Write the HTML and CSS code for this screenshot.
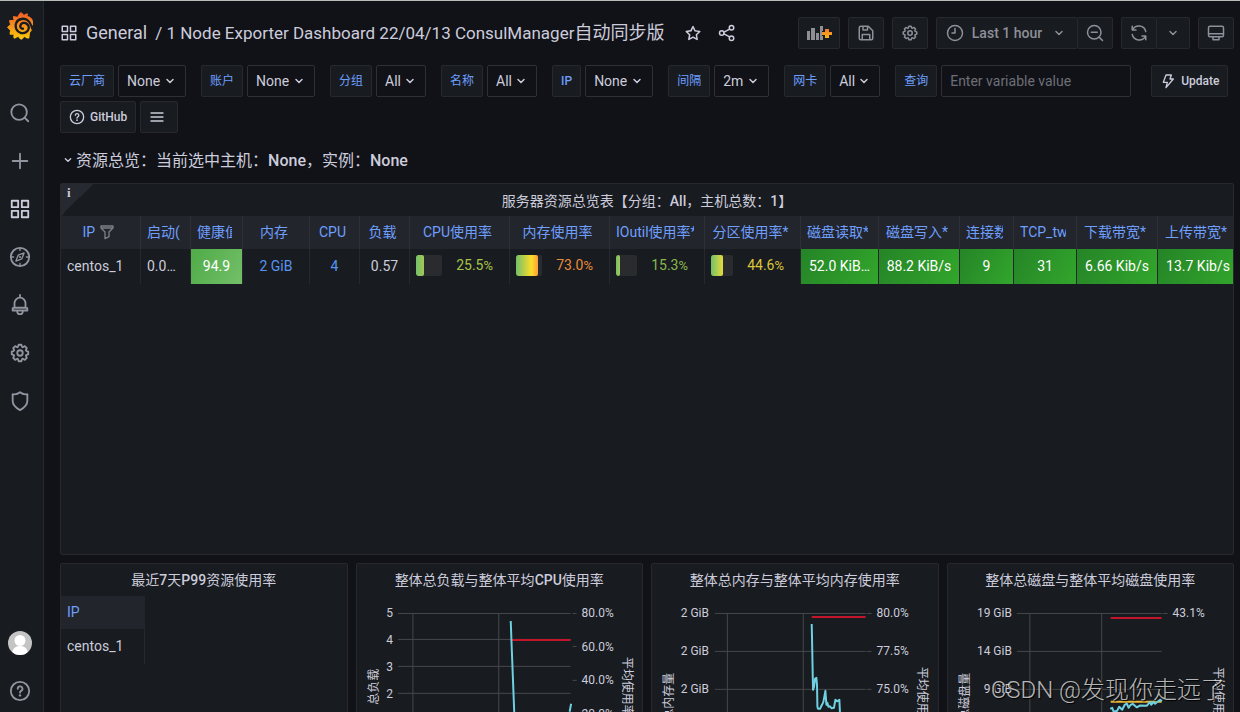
FILE: index.html
```html
<!DOCTYPE html>
<html lang="zh-CN">
<head>
    <meta charset="UTF-8">
    <meta name="viewport" content="width=device-width, initial-scale=1.0">
    <title>1 Node Exporter Dashboard - Grafana</title>
    <link rel="stylesheet" href="styles.css">
</head>
<body>
    <!-- Icon sprite -->
    <svg class="sprite" aria-hidden="true">
        <defs>
            <linearGradient id="logo-fill" x1="0" y1="0" x2="0" y2="1">
                <stop offset="0" stop-color="#f05a28"/>
                <stop offset="1" stop-color="#fbca0a"/>
            </linearGradient>
            <linearGradient id="plus-fill" x1="0" y1="0" x2="0" y2="1">
                <stop offset="0" stop-color="#f2762e"/>
                <stop offset="1" stop-color="#fbb917"/>
            </linearGradient>
        </defs>
        <symbol id="i-apps" viewBox="0 0 24 24"><path class="line" d="M3 3h7v7H3zM14 3h7v7h-7zM3 14h7v7H3zM14 14h7v7h-7z"/></symbol>
        <symbol id="i-search" viewBox="0 0 24 24"><path class="line" d="M21 21l-4-4"/><circle class="line" cx="11" cy="11" r="8.5"/></symbol>
        <symbol id="i-plus" viewBox="0 0 24 24"><path class="line" d="M12 4v16M4 12h16"/></symbol>
        <symbol id="i-compass" viewBox="0 0 24 24"><circle class="line" cx="12" cy="12" r="10"/><path class="line thin" d="M12 2v3M12 19v3M2 12h3M19 12h3M16.500 7.500l-2.500 6.500-6.500 2.500 2.500-6.500z"/><circle cx="12" cy="12" r="1.200"/></symbol>
        <symbol id="i-bell" viewBox="0 0 24 24"><path class="line" d="M12 1v3M6 15v-5a6 6 0 0 1 12 0v5M5 15h14a1 1 0 0 1 1 1v2H4v-2a1 1 0 0 1 1-1zM9 19a3 3 0 0 0 6 0"/></symbol>
        <symbol id="i-cog" viewBox="0 0 24 24"><path d="M21.32,9.55l-1.89-.63.89-1.78A1,1,0,0,0,20.13,6L18,3.87a1,1,0,0,0-1.15-.19l-1.78.89-.63-1.89A1,1,0,0,0,13.5,2h-3a1,1,0,0,0-.95.68L8.92,4.57,7.14,3.68A1,1,0,0,0,6,3.87L3.87,6a1,1,0,0,0-.19,1.15l.89,1.78-1.89.63A1,1,0,0,0,2,10.5v3a1,1,0,0,0,.68.95l1.89.63-.89,1.78A1,1,0,0,0,3.87,18L6,20.13a1,1,0,0,0,1.15.19l1.78-.89.63,1.89a1,1,0,0,0,.95.68h3a1,1,0,0,0,.95-.68l.63-1.89,1.78.89A1,1,0,0,0,18,20.13L20.13,18a1,1,0,0,0,.19-1.15l-.89-1.78,1.89-.63A1,1,0,0,0,22,13.5v-3A1,1,0,0,0,21.32,9.55ZM20,12.78l-1.2.4A2,2,0,0,0,17.64,16l.57,1.14-1.1,1.1L16,17.64a2,2,0,0,0-2.79,1.16l-.4,1.2H11.22l-.4-1.2A2,2,0,0,0,8,17.64l-1.14.57-1.1-1.1L6.36,16A2,2,0,0,0,5.2,13.18L4,12.78V11.22l1.2-.4A2,2,0,0,0,6.36,8L5.79,6.89l1.1-1.1L8,6.36A2,2,0,0,0,10.82,5.2l.4-1.2h1.56l.4,1.2A2,2,0,0,0,16,6.36l1.14-.57,1.1,1.1L17.64,8a2,2,0,0,0,1.16,2.79l1.2.4ZM12,8a4,4,0,1,0,4,4A4,4,0,0,0,12,8Zm0,6a2,2,0,1,1,2-2A2,2,0,0,1,12,14Z"/></symbol>
        <symbol id="i-shield" viewBox="0 0 24 24"><path class="line" d="M4 4.500c3 .6 5.500 0 8-2 2.500 2 5 2.600 8 2v7.500c0 4-3.500 7.500-8 10-4.500-2.500-8-6-8-10z"/></symbol>
        <symbol id="i-help" viewBox="0 0 24 24"><circle class="line" cx="12" cy="12" r="10"/><path class="line" d="M9.500 9.500a2.600 2.600 0 1 1 3.800 2.300c-.9.500-1.300.9-1.300 2"/><circle cx="12" cy="16.800" r="1.300"/></symbol>
        <symbol id="i-star" viewBox="0 0 24 24"><path d="M22,9.67A1,1,0,0,0,21.14,9l-5.69-.83L12.9,3a1,1,0,0,0-1.8,0L8.55,8.16,2.86,9a1,1,0,0,0-.81.68,1,1,0,0,0,.25,1l4.13,4-1,5.68A1,1,0,0,0,6.9,21.44L12,18.77l5.1,2.67a.93.93,0,0,0,.46.12,1,1,0,0,0,.59-.19,1,1,0,0,0,.4-1l-1-5.68,4.13-4A1,1,0,0,0,22,9.67Zm-6.15,4a1,1,0,0,0-.29.88l.72,4.2-3.76-2a1.06,1.06,0,0,0-.94,0l-3.76,2,.72-4.2a1,1,0,0,0-.29-.88l-3-3,4.21-.61a1,1,0,0,0,.76-.55L12,5.7l1.88,3.82a1,1,0,0,0,.76.55l4.21.61Z"/></symbol>
        <symbol id="i-share" viewBox="0 0 24 24"><path class="line" d="M8 10.800l7.500-4M8 13.200l7.500 4"/><circle class="line" cx="5" cy="12" r="3"/><circle class="line" cx="18" cy="5" r="3"/><circle class="line" cx="18" cy="19" r="3"/></symbol>
        <symbol id="i-save" viewBox="0 0 24 24"><path class="line" d="M3 5a2 2 0 0 1 2-2h10l6 6v10a2 2 0 0 1-2 2H5a2 2 0 0 1-2-2zM8 3v5h6V3M7 21v-7h10v7"/></symbol>
        <symbol id="i-clock" viewBox="0 0 24 24"><circle class="line" cx="12" cy="12" r="10"/><path class="line" d="M12 6v6H8"/></symbol>
        <symbol id="i-down" viewBox="0 0 24 24"><path class="line" d="M8 10l4 4 4-4"/></symbol>
        <symbol id="i-zoomout" viewBox="0 0 24 24"><path class="line" d="M22 22l-4.500-4.500M7 11h8"/><circle class="line" cx="11" cy="11" r="9"/></symbol>
        <symbol id="i-sync" viewBox="0 0 24 24"><path class="line" d="M3 3v5h5M3.500 7.500A9.500 9.500 0 0 1 21 10M21 21v-5h-5M20.500 16.500A9.500 9.500 0 0 1 3 14"/></symbol>
        <symbol id="i-monitor" viewBox="0 0 24 24"><path class="line" d="M4 3h16a2 2 0 0 1 2 2v10a2 2 0 0 1-2 2H4a2 2 0 0 1-2-2V5a2 2 0 0 1 2-2zM2 13h20M8 17v4h8v-4"/></symbol>
        <symbol id="i-bolt" viewBox="0 0 24 24"><path class="line" d="M9 3h8l-2 6h5L9 22l2-8H5z"/></symbol>
        <symbol id="i-bars" viewBox="0 0 24 24"><path class="line" d="M3 6h18M3 12h18M3 18h18"/></symbol>
        <symbol id="i-filter" viewBox="0 0 24 24"><path class="line" d="M3 3h18v3l-6 6v7l-6 3V12L3 6zM3 6h18"/></symbol>
    </svg>

    <!-- Side Menu -->
    <nav class="sidemenu">
        <a href="#" class="logo" aria-label="Grafana">
            <svg viewBox="0 0 78 84">
                <path fill="url(#logo-fill)" d="M42 0l9 8c5-3 9-4 12-3l-1 7c9 3 14 8 16 15l0 12-3 3 1 9c-1 4-3 6-5 8l-2 3-2 17c-6 1-11-1-14-5l-9 9c-5-2-9-5-10-9l-12 6c-3-3-4-8-2-12l-11 0c-2-4-1-9 1-12l-10-10 10-9c-3-4-4-8-3-13l13 0c-3-5-2-9-1-12l13 2c2-6 5-10 10-14z"/>
                <path fill="none" stroke="#181b1f" stroke-width="7" stroke-linecap="round" d="M76 50C70 26 56 18 43 21 28 24 23 38 28 51c5 12 20 16 30 9 9-6 10-18 2-24-7-6-18-4-20 5-1 6 3 10 8 9"/>
            </svg>
        </a>
        <a href="#" class="side-link" aria-label="Search"><svg><use href="#i-search"/></svg></a>
        <a href="#" class="side-link" aria-label="Create"><svg><use href="#i-plus"/></svg></a>
        <a href="#" class="side-link active" aria-label="Dashboards"><svg><use href="#i-apps"/></svg></a>
        <a href="#" class="side-link" aria-label="Explore"><svg><use href="#i-compass"/></svg></a>
        <a href="#" class="side-link" aria-label="Alerting"><svg><use href="#i-bell"/></svg></a>
        <a href="#" class="side-link" aria-label="Configuration"><svg><use href="#i-cog"/></svg></a>
        <a href="#" class="side-link" aria-label="Server Admin"><svg><use href="#i-shield"/></svg></a>
        <div class="side-bottom">
            <a href="#" class="side-link avatar" aria-label="Profile">
                <svg viewBox="0 0 24 24">
                    <clipPath id="round"><circle cx="12" cy="12" r="12"/></clipPath>
                    <g clip-path="url(#round)">
                        <rect width="24" height="24" fill="#c4c4c4"/>
                        <circle cx="12" cy="9.500" r="5.500" fill="#fff"/>
                        <path fill="#fff" d="M4 24c0-6 3-9 8-9s8 3 8 9z"/>
                    </g>
                </svg>
            </a>
            <a href="#" class="side-link" aria-label="Help"><svg><use href="#i-help"/></svg></a>
        </div>
    </nav>

    <!-- Main Content -->
    <main class="dashboard">
        <header class="toolbar">
            <svg class="icon"><use href="#i-apps"/></svg>
            <h1 class="page-title"><a href="#">General</a><a href="#" class="board-name">/ 1 Node Exporter Dashboard 22/04/13 ConsulManager<span>自动同步版</span></a></h1>
            <button class="icon-btn" aria-label="Mark as favorite"><svg class="icon"><use href="#i-star"/></svg></button>
            <button class="icon-btn" aria-label="Share"><svg class="icon"><use href="#i-share"/></svg></button>
            <div class="toolbar-actions">
                <button class="btn btn-wide" aria-label="Add panel">
                    <svg class="add-panel" viewBox="0 0 24 14">
                        <path fill="#8e8f94" d="M0 5h3v9H0zM4 2h4v12H4zM9 7h3v7H9zM13 0h3v5h-1v5h1v4h-3z"/>
                        <path fill="url(#plus-fill)" d="M18 3h4v3h3v3h-3v3h-4V9h-3V6h3z"/>
                    </svg>
                </button>
                <button class="btn" aria-label="Save dashboard"><svg class="icon"><use href="#i-save"/></svg></button>
                <button class="btn" aria-label="Dashboard settings"><svg class="icon"><use href="#i-cog"/></svg></button>
                <div class="btn-group">
                    <button class="btn btn-time"><svg class="icon"><use href="#i-clock"/></svg>Last 1 hour<svg class="icon"><use href="#i-down"/></svg></button>
                    <button class="btn" aria-label="Zoom out"><svg class="icon"><use href="#i-zoomout"/></svg></button>
                </div>
                <div class="btn-group">
                    <button class="btn" aria-label="Refresh"><svg class="icon"><use href="#i-sync"/></svg></button>
                    <button class="btn btn-caret" aria-label="Refresh interval"><svg class="icon"><use href="#i-down"/></svg></button>
                </div>
                <button class="btn" aria-label="Cycle view mode"><svg class="icon"><use href="#i-monitor"/></svg></button>
            </div>
        </header>

        <!-- Variables -->
        <div class="submenu">
            <div class="variable"><label for="var-vendor">云厂商</label><select id="var-vendor"><option>None</option></select></div>
            <div class="variable"><label for="var-account">账户</label><select id="var-account"><option>None</option></select></div>
            <div class="variable"><label for="var-group">分组</label><select id="var-group"><option>All</option></select></div>
            <div class="variable"><label for="var-name">名称</label><select id="var-name"><option>All</option></select></div>
            <div class="variable"><label for="var-ip"><b>IP</b></label><select id="var-ip"><option>None</option></select></div>
            <div class="variable"><label for="var-interval">间隔</label><select id="var-interval"><option>2m</option></select></div>
            <div class="variable"><label for="var-nic">网卡</label><select id="var-nic"><option>All</option></select></div>
            <div class="variable"><label for="var-query">查询</label><input type="text" id="var-query" placeholder="Enter variable value"></div>
            <a href="#" class="btn dash-link update-link"><svg class="icon"><use href="#i-bolt"/></svg>Update</a>
        </div>
        <div class="links">
            <a href="#" class="btn dash-link"><svg class="icon"><use href="#i-help"/></svg>GitHub</a>
            <button class="btn menu-btn" aria-label="Dashboards menu"><svg class="icon"><use href="#i-bars"/></svg></button>
        </div>

        <h2 class="row-title"><svg class="icon"><use href="#i-down"/></svg><span>资源总览<span class="colon">：</span>当前选中主机<span class="colon">：</span><b>None</b>，实例<span class="colon">：</span><b>None</b></span></h2>

        <!-- Overview table -->
        <section class="panel overview">
            <span class="panel-info">i</span>
            <h3 class="panel-title">服务器资源总览表【分组<span class="colon">：</span><b>All</b>，主机总数<span class="colon">：</span><b>1</b>】</h3>
            <div class="table-wrap">
                <table class="overview-table">
                    <colgroup>
                        <col class="w80"><col class="w50"><col class="w52"><col class="w67"><col class="w50"><col class="w50">
                        <col class="w100"><col class="w100"><col class="w95"><col class="w96"><col class="w78"><col class="w81">
                        <col class="w54"><col class="w63"><col class="w81"><col class="w81">
                    </colgroup>
                    <thead>
                        <tr>
                            <th><div>IP <svg class="filter"><use href="#i-filter"/></svg></div></th>
                            <th><div>启动(</div></th>
                            <th><div>健康值</div></th>
                            <th><div>内存</div></th>
                            <th><div>CPU</div></th>
                            <th><div>负载</div></th>
                            <th><div>CPU使用率</div></th>
                            <th><div>内存使用率</div></th>
                            <th><div>IOutil使用率*</div></th>
                            <th><div>分区使用率*</div></th>
                            <th><div>磁盘读取*</div></th>
                            <th><div>磁盘写入*</div></th>
                            <th><div>连接数</div></th>
                            <th><div>TCP_tw</div></th>
                            <th><div>下载带宽*</div></th>
                            <th><div>上传带宽*</div></th>
                        </tr>
                    </thead>
                    <tbody>
                        <tr>
                            <td class="left">centos_1</td>
                            <td class="left">0.0…</td>
                            <td class="health">94.9</td>
                            <td class="blue">2 GiB</td>
                            <td class="blue">4</td>
                            <td>0.57</td>
                            <td><div class="gauge-cell"><div class="gauge"><div class="fill fill-low" style="width: 31%"></div></div><span class="value lime">25.5<small>%</small></span></div></td>
                            <td><div class="gauge-cell"><div class="gauge"><div class="fill fill-high" style="width: 85%"></div></div><span class="value orange">73.0<small>%</small></span></div></td>
                            <td><div class="gauge-cell"><div class="gauge"><div class="fill fill-low" style="width: 20%"></div></div><span class="value green">15.3<small>%</small></span></div></td>
                            <td><div class="gauge-cell"><div class="gauge"><div class="fill fill-mid" style="width: 55%"></div></div><span class="value yellow">44.6<small>%</small></span></div></td>
                            <td class="good">52.0 KiB…</td>
                            <td class="good">88.2 KiB/s</td>
                            <td class="good">9</td>
                            <td class="good">31</td>
                            <td class="good">6.66 Kib/s</td>
                            <td class="good">13.7 Kib/s</td>
                        </tr>
                    </tbody>
                </table>
            </div>
        </section>

        <!-- Bottom panels -->
        <div class="panel-row">
            <section class="panel">
                <h3 class="panel-title">最近<b>7</b>天<b>P99</b>资源使用率</h3>
                <table class="p99-table">
                    <thead><tr><th>IP</th></tr></thead>
                    <tbody><tr><td>centos_1</td></tr></tbody>
                </table>
            </section>

            <section class="panel">
                <h3 class="panel-title">整体总负载与整体平均<b>CPU</b>使用率</h3>
                <svg class="chart" viewBox="0 0 286 180">
                    <path class="grid" d="M41 17.500H214M41 43.500H214M41 70.500H214M41 97.500H214M41 124.500H214M56 17V180M142 17V180M216 17.500h4M216 50.500h4M216 84.500h4M216 117.500h4"/>
                    <g class="tick-left">
                        <text x="36" y="21">5</text><text x="36" y="48">4</text><text x="36" y="75">3</text><text x="36" y="102">2</text>
                    </g>
                    <g class="tick-right">
                        <text x="225" y="21">80.0%</text><text x="225" y="55">60.0%</text><text x="225" y="88">40.0%</text><text x="225" y="122">20.0%</text>
                    </g>
                    <path class="series red" d="M154 44H214"/>
                    <path class="series cyan" d="M154 25L155 52L157.500 116L160 140M213 116L214.500 108"/>
                    <text class="axis-name" transform="translate(17 91) rotate(-90)">总负载</text>
                    <text class="axis-name" transform="translate(270 91) rotate(90)">平均使用率</text>
                </svg>
            </section>

            <section class="panel">
                <h3 class="panel-title">整体总内存与整体平均内存使用率</h3>
                <svg class="chart" viewBox="0 0 286 180">
                    <path class="grid" d="M63 17.500H214M63 55.500H214M63 93.500H214M75.500 17V180M151.500 17V180M215 17.500h5M215 55.500h5M215 93.500h5"/>
                    <g class="tick-left">
                        <text x="57" y="21">2 GiB</text><text x="57" y="59">2 GiB</text><text x="57" y="97">2 GiB</text>
                    </g>
                    <g class="tick-right">
                        <text x="225" y="21">80.0%</text><text x="225" y="59">77.5%</text><text x="225" y="97">75.0%</text>
                    </g>
                    <path class="series red" d="M160 21H214"/>
                    <path class="series cyan" d="M160 28L160.300 42L161 79L161.300 94L162.300 91L163.300 83L164.700 82L165.300 89L165.700 111L166.300 113L168.300 113L170.300 109L171.700 106L173.700 95L174.700 109L175.700 107L176.700 111L178.300 110.500L180 112.500L182.300 112L183.700 104L185.300 105.500L187.700 104L188.300 117"/>
                    <text class="axis-name" transform="translate(17 101) rotate(-90)">总内存量</text>
                    <text class="axis-name" transform="translate(270 101) rotate(90)">平均使用率</text>
                </svg>
            </section>

            <section class="panel">
                <h3 class="panel-title">整体总磁盘与整体平均磁盘使用率</h3>
                <svg class="chart" viewBox="0 0 286 180">
                    <path class="grid" d="M69 17.500H214M69 55.500H214M69 93.500H214M82 17V180M154 17V180M215 17.500h5"/>
                    <g class="tick-left">
                        <text x="64" y="21">19 GiB</text><text x="64" y="59">14 GiB</text><text x="64" y="97">9 GiB</text>
                    </g>
                    <g class="tick-right"><text x="225" y="21">43.1%</text></g>
                    <path class="series red" d="M163 22H214"/>
                    <path class="series amber" d="M163 106H214"/>
                    <path class="series cyan" d="M162.500 113L164.500 112L166 116L169.500 115L171.500 111L174.500 114L177 109L179 107.700L181 112L183 109L185 108L189 111.500L192.500 109.700L199 110L202.500 106L203.500 109L206 106L207.500 108L211 105L212.500 104L214.500 105"/>
                    <text class="axis-name" transform="translate(17 101) rotate(-90)">总磁盘量</text>
                    <text class="axis-name" transform="translate(270 101) rotate(90)">平均使用率</text>
                </svg>
            </section>
        </div>
    </main>

    <div class="watermark">CSDN @发现你走远了</div>
</body>
</html>
```
FILE: styles.css
```css
* {
    box-sizing: border-box;
}
body {
    margin: 0;
    height: 100vh;
    overflow: hidden;
    display: flex;
    border-top: 1px solid #b5bdb5;
    background-color: #111217;
    color: #ccccdc;
    font-family: Roboto, "Noto Sans CJK SC", sans-serif;
    font-size: 14px;
    line-height: 20px;
}
a {
    color: inherit;
    text-decoration: none;
}
button {
    font: inherit;
    color: inherit;
    cursor: pointer;
}
b {
    font-weight: 500;
}
svg {
    fill: currentColor;
    flex-shrink: 0;
}
.sprite {
    position: absolute;
    width: 0;
    height: 0;
}
.line {
    fill: none;
    stroke: currentColor;
    stroke-width: 2;
    stroke-linejoin: round;
    stroke-linecap: round;
}
.thin {
    stroke-width: 1.5;
}
.icon {
    width: 18px;
    height: 18px;
}
/* The TC face centres the full-width colon */
.colon {
    font-family: "Noto Sans CJK TC", sans-serif;
}

/* Side menu */
.sidemenu {
    width: 44px;
    flex-shrink: 0;
    display: flex;
    flex-direction: column;
    padding-right: 4px;
    background-color: #181b1f;
    border-right: 1px solid #26282d;
    color: #9294a0;
}
.logo {
    height: 88px;
    padding-top: 11px;
    text-align: center;
}
.logo svg {
    width: 26px;
    height: 28px;
}
.side-link {
    height: 48px;
    display: flex;
    align-items: center;
    justify-content: center;
}
.side-link svg {
    width: 24px;
    height: 24px;
    padding: 1px;
}
.side-link.avatar svg {
    padding: 0;
}
.side-link.active {
    color: #ccccdc;
}
.side-bottom {
    margin-top: auto;
    margin-bottom: -3px;
}

/* Toolbar */
.dashboard {
    flex: 1;
    min-width: 0;
    padding: 16px 6px 0 16px;
}
.toolbar {
    display: flex;
    align-items: center;
    height: 32px;
    margin-bottom: 16px;
}
.page-title {
    display: flex;
    align-items: baseline;
    gap: 8px;
    margin: 0 20px 0 8px;
    font-size: 18px;
    font-weight: 400;
    white-space: nowrap;
}
.board-name {
    font-size: 17px;
}
.board-name span {
    font-size: 18px;
}
.icon-btn {
    display: flex;
    margin-right: 16px;
    padding: 0;
    border: none;
    background: none;
}
.toolbar-actions {
    display: flex;
    gap: 8px;
    margin-left: auto;
    color: #8e8f99;
}
.btn {
    display: flex;
    align-items: center;
    justify-content: center;
    gap: 8px;
    height: 32px;
    min-width: 36px;
    padding: 0 8px;
    background-color: #181b1f;
    border: 1px solid #26282d;
    border-radius: 2px;
    font-weight: 500;
}
.btn-wide {
    width: 42px;
}
.btn-time {
    width: 142px;
}
.btn-caret {
    min-width: 34px;
    padding: 0 7px;
}
.add-panel {
    width: 24px;
    height: 14px;
    overflow: visible;
}
.btn-group {
    display: flex;
}
.btn-group .btn + .btn {
    margin-left: -1px;
}

/* Variables */
.submenu {
    display: flex;
    flex-wrap: wrap;
    gap: 4px 15px;
    margin-bottom: 4px;
}
.variable {
    display: flex;
    gap: 4px;
}
.variable label {
    display: flex;
    align-items: center;
    padding: 0 8px;
    background-color: #181b1f;
    border: 1px solid #26282d;
    border-radius: 2px;
    color: #6e9fff;
    font-size: 12px;
}
.variable select, .variable input {
    height: 32px;
    padding: 0 8px;
    border: 1px solid #2e3036;
    border-radius: 2px;
    background-color: #111217;
    color: #ccccdc;
    font: inherit;
}
.variable select {
    appearance: none;
    padding-right: 24px;
    background-image: url("data:image/svg+xml,%3Csvg xmlns='http://www.w3.org/2000/svg' viewBox='0 0 16 16'%3E%3Cpath d='M5 6.500l3 3 3-3' fill='none' stroke='%23ccccdc' stroke-width='1.500' stroke-linecap='round'/%3E%3C/svg%3E");
    background-repeat: no-repeat;
    background-position: right 7px center;
    background-size: 16px;
}
.variable input {
    width: 190px;
}
.variable input::placeholder {
    color: #6d6f78;
    opacity: 1;
}
.links {
    display: flex;
    gap: 4px;
}
.dash-link {
    gap: 5px;
    font-size: 12px;
}
.dash-link .icon {
    width: 16px;
    height: 16px;
}
.update-link {
    margin-left: 5px;
}
.menu-btn {
    width: 38px;
    justify-content: flex-start;
}
.menu-btn .icon {
    width: 16px;
}
.row-title {
    display: flex;
    align-items: center;
    height: 24px;
    margin: 15px 0 11px;
    font-size: 16px;
    font-weight: 400;
}
.row-title .icon {
    width: 16px;
}

/* Panels */
.panel {
    position: relative;
    background-color: #181b1f;
    border: 1px solid #26282d;
    border-radius: 2px;
    overflow: hidden;
}
.overview {
    height: 372px;
    margin-bottom: 8px;
}
.panel-title {
    height: 32px;
    margin: 0;
    font-size: 14px;
    font-weight: 400;
    line-height: 32px;
    text-align: center;
}
.panel-info {
    position: absolute;
    top: 0;
    left: 0;
    width: 32px;
    height: 32px;
    padding-left: 6px;
    background: linear-gradient(135deg, #26292f 50%, transparent 50%);
    font: bold 13px/18px "Liberation Serif", serif;
}
.panel-row {
    display: grid;
    grid-template-columns: repeat(4, 1fr);
    gap: 8px;
}
.panel-row .panel {
    height: 280px;
}
.table-wrap {
    overflow: hidden;
}
table {
    border-spacing: 0;
    table-layout: fixed;
}
.overview-table {
    width: calc(100% + 6px);
}
th {
    height: 33px;
    padding: 0 10px 2px 6px;
    background-color: #22252b;
    border-right: 1px solid #2e3036;
    color: #6e9fff;
    font-weight: 400;
}
th div {
    overflow: hidden;
    white-space: nowrap;
}
.filter {
    width: 16px;
    height: 16px;
    color: #7d7f88;
    vertical-align: -3px;
}
td {
    height: 35px;
    padding: 0 6px 2px;
    border-right: 1px solid #26282d;
    background-clip: padding-box;
    overflow: hidden;
    text-align: center;
    text-overflow: ellipsis;
    white-space: nowrap;
}
td.left {
    text-align: left;
}
.health {
    background-image: linear-gradient(120deg, #4fab47, #73bf69);
    color: #ffffff;
}
.good {
    background-image: linear-gradient(120deg, #258427, #32a62c);
    color: #ffffff;
}
.blue { color: #5794f2; }
.lime { color: #a9c34a; }
.green { color: #8ab84f; }
.orange { color: #e88a3c; }
.yellow { color: #dcc439; }
.w50 { width: 50px; }
.w52 { width: 52px; }
.w54 { width: 54px; }
.w63 { width: 63px; }
.w67 { width: 67px; }
.w78 { width: 78px; }
.w80 { width: 80px; }
.w81 { width: 81px; }
.w95 { width: 95px; }
.w96 { width: 96px; }
.w100 { width: 100px; }
.gauge-cell {
    display: flex;
    align-items: center;
    padding-right: 10px;
}
.gauge {
    flex: 1;
    height: 21px;
    background-color: #2a2b2f;
    border-radius: 2px;
    overflow: hidden;
}
.fill {
    height: 100%;
    border-radius: 2px;
}
.fill-low { background: linear-gradient(90deg, #73bf69, #a3c957); }
.fill-mid { background: linear-gradient(90deg, #73bf69, #e6dc3c); }
.fill-high { background: linear-gradient(90deg, #73bf69, #fade2a 70%, #ff9e38); }
.value {
    width: 51px;
    text-align: right;
}
.value small {
    font-size: 13px;
}
.p99-table {
    width: 84px;
}
.p99-table th {
    text-align: left;
    border-right-color: #22252b;
}
.p99-table td {
    text-align: left;
}

/* Charts */
.chart {
    display: block;
    width: 100%;
    font-size: 12px;
}
.grid {
    fill: none;
    stroke: #46484b;
}
.tick-left {
    text-anchor: end;
}
.series {
    fill: none;
    stroke-width: 2;
    stroke-linejoin: round;
}
.red { stroke: #c4162a; }
.cyan { stroke: #6ed0e0; }
.amber { stroke: #eab839; }
.axis-name {
    text-anchor: middle;
    dominant-baseline: central;
}

.watermark {
    position: absolute;
    right: 15px;
    bottom: 4px;
    color: rgba(255, 255, 255, 0.7);
    font-size: 24px;
    font-weight: 300;
    line-height: 36px;
    text-shadow: 1px 1px 1px #000000;
}
```
